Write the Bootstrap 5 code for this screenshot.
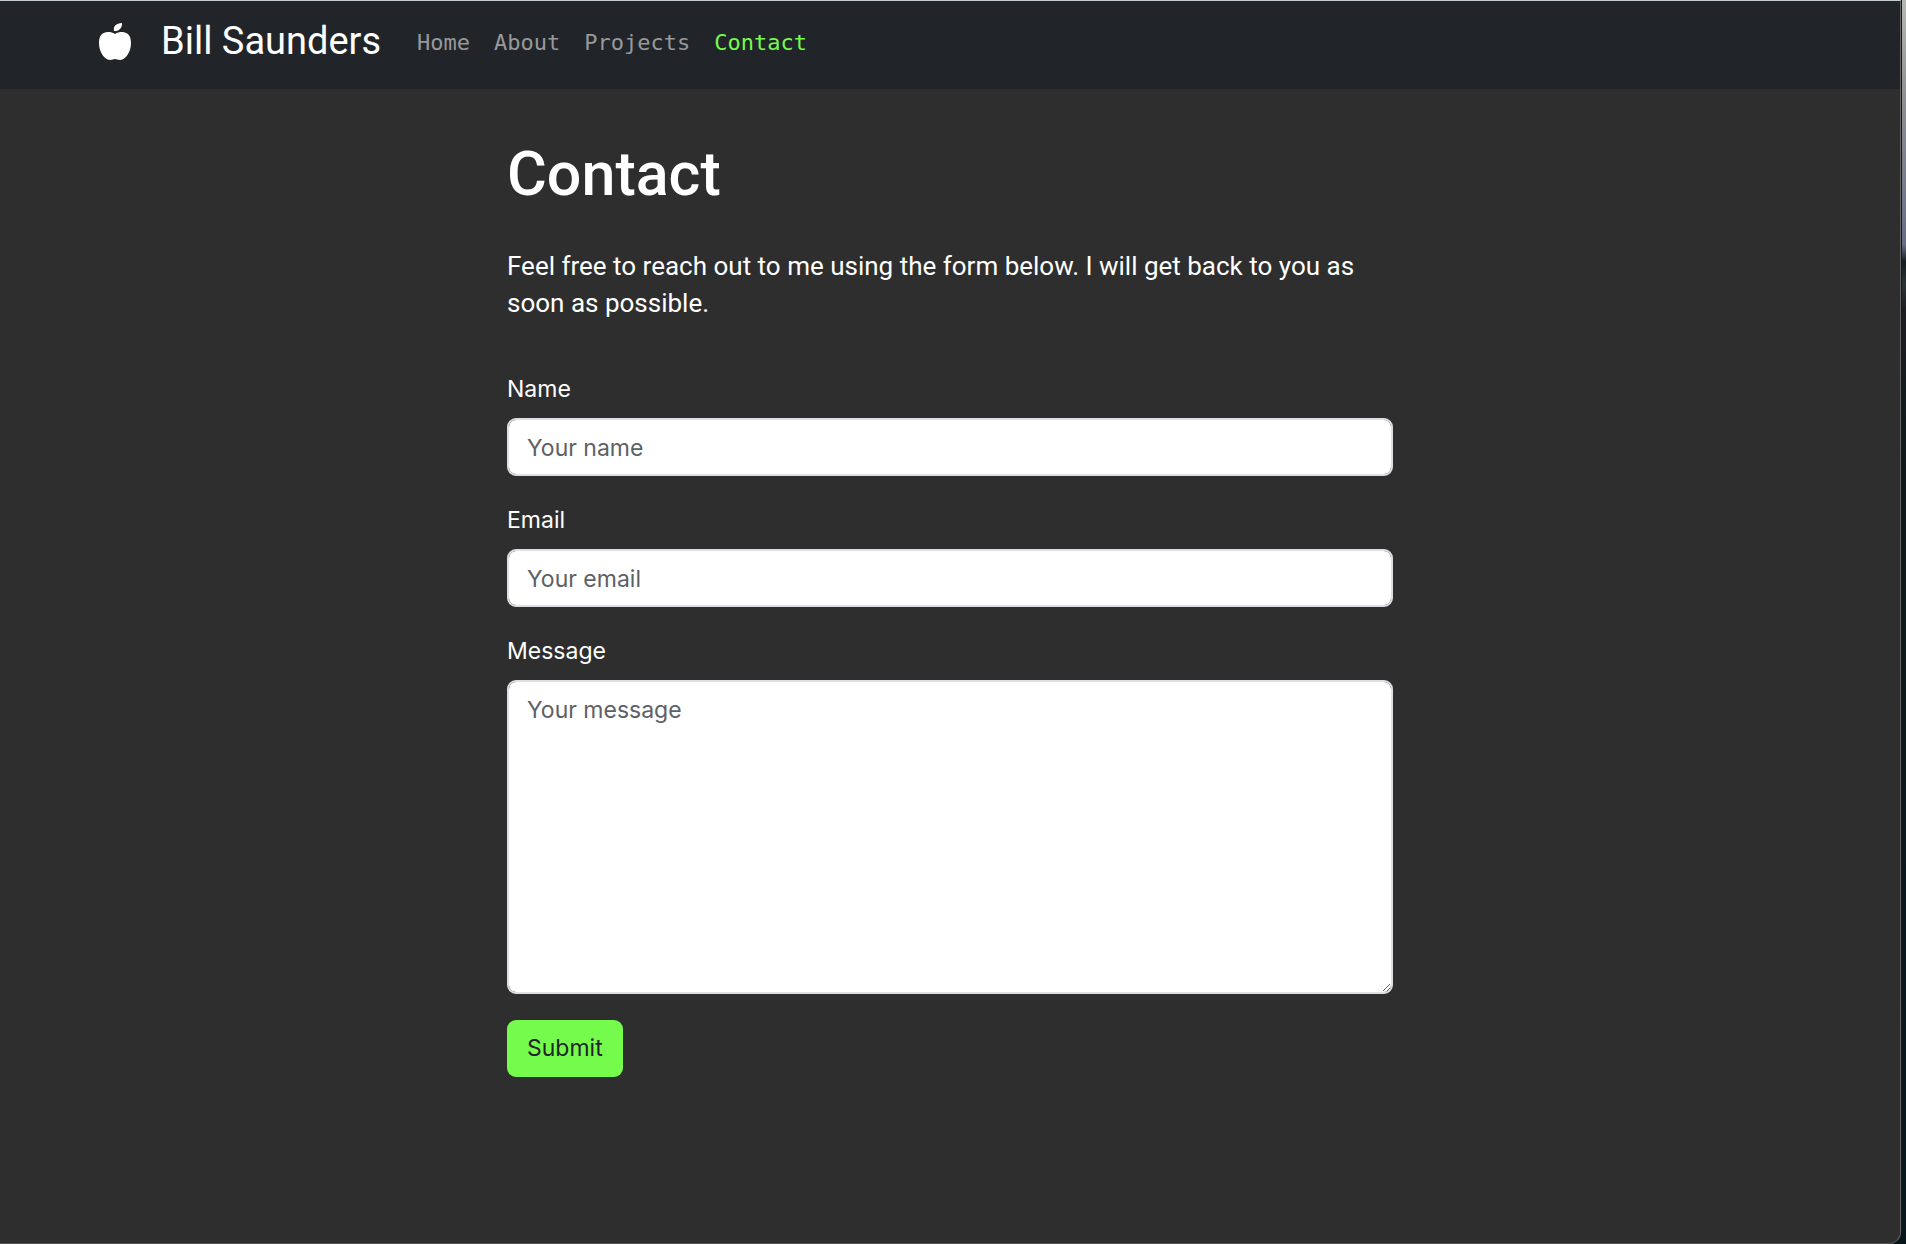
<!DOCTYPE html>
<html lang="en">
<head>
<meta charset="utf-8">
<meta name="viewport" content="width=device-width, initial-scale=1">
<title>Contact - Bill Saunders</title>
<link href="https://cdn.jsdelivr.net/npm/bootstrap@5.3.0/dist/css/bootstrap.min.css" rel="stylesheet">
<style>
  /* desktop showing past the window's right edge */
  body {
    background: linear-gradient(#b5b8b3 0, #8d8f90 100px, #73788a 200px, #666c80 245px, #141d20 262px, #2a3335 285px, #1d1d24 310px, #10191b 420px, #07161b 100%);
    font-family: Inter, "Liberation Sans", sans-serif;
    font-size: 23px;
    line-height: 37px;
  }
  .window {
    background: #2e2e2e;
    border-top: 1px solid #c3cdcb;
    border-right: 1px solid #666;
    border-bottom: 1px solid #555;
    border-bottom-right-radius: 12px;
    box-shadow: 1px 0 0 #15191b;
    margin-right: 5px;
    overflow: hidden;
  }
  .site-nav {
    --bs-navbar-padding-y: 12px;
    --bs-navbar-nav-link-padding-x: 12px;
    height: 88px;
    padding-left: 87px;
  }
  .site-nav .navbar-brand {
    --bs-navbar-brand-font-size: 38px;
    font-family: Roboto, "Open Sans", sans-serif;
    line-height: 48px;
    gap: 30px;
    margin-right: 24px;
    padding: 0 0 8px;
  }
  .site-nav .nav-link {
    color: #98999b;
    font: 22px/32px "DejaVu Sans Mono", "Liberation Mono", monospace;
    padding-top: 0;
    padding-bottom: 5px;
  }
  .site-nav .nav-link.active { color: #75fb4c; }
  .contact-col { max-width: 886px; padding-top: 48px; }
  .contact-col h1 { font: 500 61px/74px Roboto, "Open Sans", sans-serif; margin-bottom: 37px; }
  .intro { font: 26px/37px Roboto, "Open Sans", sans-serif; margin-bottom: 49px; }
  .form-label { margin-bottom: 10px; }
  .field { margin-bottom: 26px; }
  .form-control {
    border: 2px solid #dcdfe3;
    border-radius: 9px;
    font-size: 23px;
    line-height: 37px;
    padding: 10px 18px 7px;
  }
  .form-control::placeholder { color: #5d6165; }
  textarea.form-control { height: 314px; display: block; }
  .btn-submit {
    --bs-btn-bg: #75fb4c;
    --bs-btn-color: #212529;
    --bs-btn-hover-bg: #62e23b;
    --bs-btn-font-size: 23px;
    --bs-btn-line-height: 37px;
    --bs-btn-padding-x: 20px;
    --bs-btn-padding-y: 10px;
    --bs-btn-border-radius: 9px;
    border: 0;
  }
</style>
</head>
<body class="d-flex flex-column min-vh-100">
<div class="window flex-grow-1 text-white">
  <nav class="site-nav navbar navbar-expand bg-dark" data-bs-theme="dark">
    <div class="container-fluid">
      <a class="navbar-brand d-flex align-items-center text-white" href="#">
        <svg width="32" height="37" viewBox="0 0 32 37" fill="#fff" aria-hidden="true">
          <path d="M15 8C14 3 17 .4 23 0C23.400 5 20 8.400 15 8Z"/>
          <path d="M16 11C19 9 22 8.800 25 9.200C30 10 32 14 32 20C32 28 27.500 36.500 21 37C19 37 17.500 36 16 36C14.500 36 13 37 11 37C4.500 36.500 0 28 0 20C0 14 2 10 7 9.200C10 8.800 13 9 16 11Z"/>
        </svg>
        <span>Bill Saunders</span>
      </a>
      <ul class="navbar-nav me-auto">
        <li class="nav-item"><a class="nav-link" href="#">Home</a></li>
        <li class="nav-item"><a class="nav-link" href="#">About</a></li>
        <li class="nav-item"><a class="nav-link" href="#">Projects</a></li>
        <li class="nav-item"><a class="nav-link active" aria-current="page" href="#">Contact</a></li>
      </ul>
    </div>
  </nav>
  <main class="contact-col mx-auto">
    <h1>Contact</h1>
    <p class="intro">Feel free to reach out to me using the form below. I will get back to you as soon as possible.</p>
    <form>
      <div class="field">
        <label class="form-label" for="name">Name</label>
        <input class="form-control" type="text" id="name" placeholder="Your name">
      </div>
      <div class="field">
        <label class="form-label" for="email">Email</label>
        <input class="form-control" type="email" id="email" placeholder="Your email">
      </div>
      <div class="field">
        <label class="form-label" for="message">Message</label>
        <textarea class="form-control" id="message" placeholder="Your message"></textarea>
      </div>
      <button class="btn btn-submit" type="submit">Submit</button>
    </form>
  </main>
</div>
<script src="https://cdn.jsdelivr.net/npm/bootstrap@5.3.0/dist/js/bootstrap.bundle.min.js"></script>
</body>
</html>
